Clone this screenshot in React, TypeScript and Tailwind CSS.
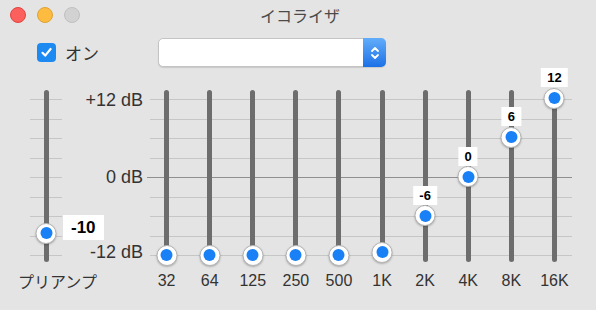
import React from 'react';

type Band = { label: string; value: number; show?: boolean };

const BANDS: Band[] = [
  { label: '32', value: -12 },
  { label: '64', value: -12 },
  { label: '125', value: -12 },
  { label: '250', value: -12 },
  { label: '500', value: -12 },
  { label: '1K', value: -11.6 },
  { label: '2K', value: -6, show: true },
  { label: '4K', value: 0, show: true },
  { label: '8K', value: 6, show: true },
  { label: '16K', value: 12, show: true },
];

// value (-12..12) -> knob centre inside the 172px slider area
const knobY = (v: number) => 8 + ((12 - v) / 24) * 157;

const Ticks: React.FC<{ mid?: boolean }> = ({ mid }) => (
  <div className="absolute inset-x-0 top-[9px] h-[157px] flex flex-col justify-between">
    {Array.from({ length: 9 }).map((_, i) => (
      <div
        key={i}
        className={i === 4 && mid ? 'h-px -ml-[3px] bg-[#8f8f8f]' : 'h-px bg-[#c6c6c6]'}
      />
    ))}
  </div>
);

const Knob: React.FC<{ y: number }> = ({ y }) => (
  <div
    className="absolute left-1/2 -translate-x-1/2 w-[21px] h-[21px] rounded-full bg-white border border-[#b4b4b4] shadow-[0_1px_2px_rgba(0,0,0,0.25)] flex items-center justify-center"
    style={{ top: y - 10.5 }}
  >
    <div className="w-[12px] h-[12px] rounded-full bg-[#1a80f5]" />
  </div>
);

const App: React.FC = () => {
  return (
    <div className="w-[596px] h-[310px] bg-[#e4e4e4] text-[#333] font-['Liberation_Sans','Noto_Sans_CJK_JP',sans-serif] overflow-hidden">
      {/* Title bar */}
      <div className="grid grid-cols-[1fr_auto_1fr] items-center h-[30px]">
        <div className="flex items-center gap-[11px] pl-[10px]">
          <span className="w-[16px] h-[16px] rounded-full bg-[#fc605c] border border-[#e0443e]" />
          <span className="w-[16px] h-[16px] rounded-full bg-[#fdbc40] border border-[#dea236]" />
          <span className="w-[16px] h-[16px] rounded-full bg-[#d2d2d2] border border-[#c0c0c0]" />
        </div>
        <div className="text-[16px] text-[#4a4a4a] pl-[4px] font-['Noto_Sans_CJK_JP',sans-serif]">イコライザ</div>
        <div />
      </div>

      {/* Controls */}
      <div className="flex items-center h-[29px] mt-[8px] pl-[37px]">
        <div className="w-[121px] flex items-center gap-[9px]">
          <div className="w-[19px] h-[19px] rounded-[4px] bg-[#1d8af2] flex items-center justify-center">
            <svg width="13" height="13" viewBox="0 0 13 13" fill="none">
              <path d="M2.5 6.8 L5.2 9.6 L10.6 3" stroke="white" strokeWidth="2.2" strokeLinecap="round" strokeLinejoin="round" />
            </svg>
          </div>
          <span className="text-[17px] text-[#333] font-['Noto_Sans_CJK_JP',sans-serif]">オン</span>
        </div>
        <div className="w-[228px] h-[29px] flex rounded-[5px] bg-white border border-[#c4c4c4] shadow-[0_1px_1px_rgba(0,0,0,0.12)]">
          <div className="flex-1" />
          <div className="w-[23px] -my-px -mr-px rounded-r-[5px] bg-gradient-to-b from-[#62adfa] to-[#1a70e6] flex items-center justify-center">
            <svg width="10" height="16" viewBox="0 0 10 16" fill="none">
              <path d="M2 6 L5 3 L8 6" stroke="white" strokeWidth="1.8" strokeLinecap="round" strokeLinejoin="round" />
              <path d="M2 10 L5 13 L8 10" stroke="white" strokeWidth="1.8" strokeLinecap="round" strokeLinejoin="round" />
            </svg>
          </div>
        </div>
      </div>

      {/* Sliders */}
      <div className="flex h-[172px] mt-[23px]">
        {/* Preamp */}
        <div className="relative w-[32px] ml-[30px] flex justify-center">
          <Ticks />
          <div className="relative w-[5px] h-full rounded-full bg-[#6d6d6d]" />
          <Knob y={143} />
          <div className="absolute left-[33px] top-[125px] h-[25px] px-[8px] bg-white text-[17px] font-semibold text-black leading-[25px]">
            -10
          </div>
        </div>

        {/* dB scale */}
        <div className="w-[83px] h-full pr-[2px] flex flex-col justify-between items-end text-[18px] leading-[20px] text-[#333]">
          <span>+12 dB</span>
          <span className="mt-[2px]">0 dB</span>
          <span>-12 dB</span>
        </div>

        {/* Bands */}
        <div className="relative w-[431px] h-full grid grid-cols-10">
          <div className="absolute left-[5px] right-[4px] inset-y-0">
            <Ticks mid />
          </div>
          {BANDS.map((b) => {
            const y = knobY(b.value);
            return (
              <div key={b.label} className="relative h-full flex justify-center">
                <div className="relative w-[5px] h-full rounded-full bg-[#6d6d6d]" />
                <Knob y={y} />
                {b.show && (
                  <div
                    className="absolute left-1/2 -translate-x-1/2 h-[19px] px-[6px] bg-white text-[13px] font-bold text-black leading-[19px]"
                    style={{ top: y - 30 }}
                  >
                    {b.value}
                  </div>
                )}
              </div>
            );
          })}
        </div>
      </div>

      {/* Labels */}
      <div className="flex items-center h-[38px] text-[16px] text-[#333]">
        <div className="w-[145px] pl-[18px] font-['Noto_Sans_CJK_JP',sans-serif] text-[16px]">プリアンプ</div>
        <div className="w-[431px] grid grid-cols-10 text-center">
          {BANDS.map((b) => (
            <span key={b.label}>{b.label}</span>
          ))}
        </div>
      </div>
    </div>
  );
};

export default App;
